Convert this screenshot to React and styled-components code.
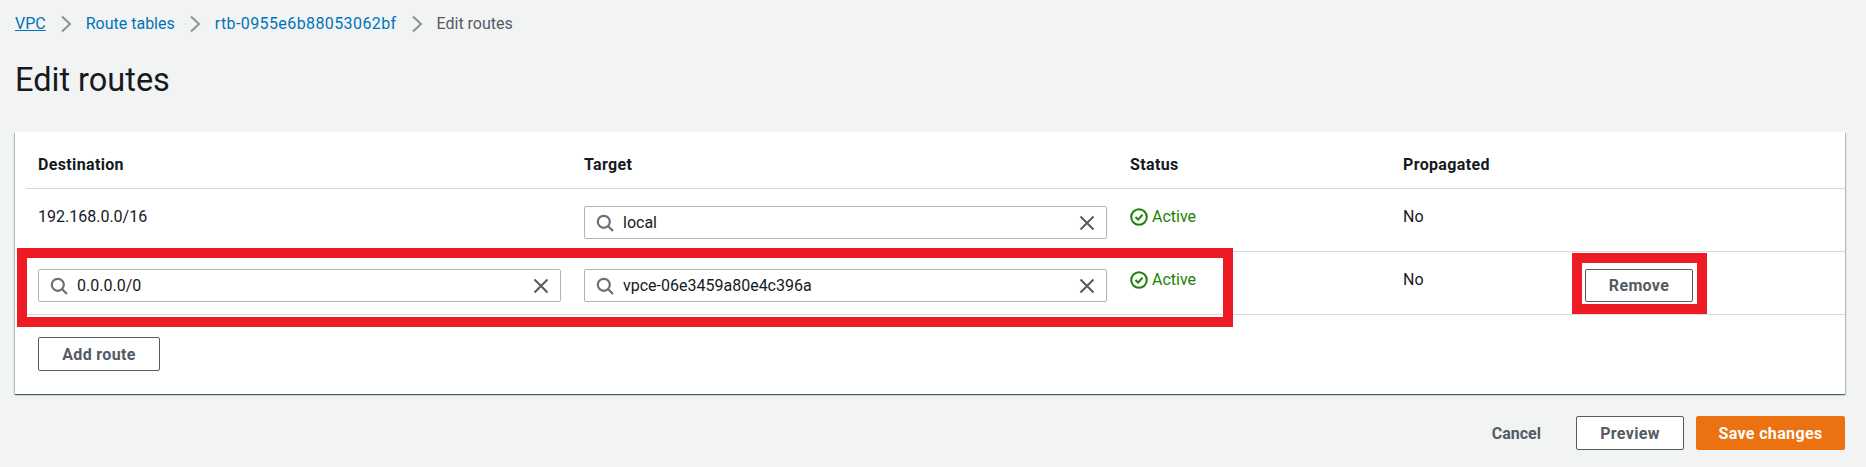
import React from "react";
import styled, { createGlobalStyle } from "styled-components";

const GlobalStyle = createGlobalStyle`
  html, body {
    margin: 0;
    padding: 0;
    background: #f2f3f3;
    font-family: Roboto, "Noto Sans", Arial, sans-serif;
    color: #16191f;
  }
`;

const Page = styled.div`
  width: 1866px;
  height: 467px;
  overflow: hidden;
  position: relative;
  box-sizing: border-box;
  padding: 14px 21px 0 15px;
`;

const Crumbs = styled.nav`
  display: flex;
  align-items: center;
  height: 20px;
  font-size: 16px;
  line-height: 20px;
`;

const Crumb = styled.a`
  color: ${(p) => (p.$current ? "#545b64" : "#0073bb")};
  text-decoration: ${(p) => (p.$under ? "underline" : "none")};
  letter-spacing: ${(p) => p.$track || 0}px;
`;

const Chevron = styled.svg`
  width: 14px;
  height: 18px;
  margin: 0 12.5px 0 13.5px;
  flex: none;
`;

const Title = styled.h1`
  margin: 27px 0 0;
  font-size: 32.5px;
  line-height: 38px;
  font-weight: 400;
`;

const Card = styled.section`
  position: relative;
  margin-top: 33px;
  height: 262px;
  background: #fff;
  box-sizing: border-box;
  padding-left: 11px;
  box-shadow: 0 1px 1px 0 rgba(0, 28, 36, 0.5), 1px 1px 1px 0 rgba(0, 28, 36, 0.2),
    -1px 1px 1px 0 rgba(0, 28, 36, 0.2);
`;

const Row = styled.div`
  display: grid;
  grid-template-columns: 546px 546px 273px 182px 1fr;
  height: ${(p) => p.$h}px;
  box-sizing: border-box;
  padding-left: 12px;
  border-bottom: 1px solid #d5dbdb;
`;

const HeadCell = styled.div`
  font-size: 16px;
  font-weight: 700;
  line-height: 20px;
  letter-spacing: 0.35px;
  padding-top: 23px;
`;

const Cell = styled.div`
  font-size: 16px;
  line-height: 20px;
  padding-top: 18px;
`;

const InputCell = styled.div`
  padding-top: 17px;
`;

const SearchBox = styled.div`
  display: flex;
  align-items: center;
  width: 523px;
  height: 33px;
  box-sizing: border-box;
  border: 1px solid #aab7b8;
  border-radius: 2px;
  padding: 0 10px 0 11px;
  font-size: 16px;
  background: #fff;
`;

const BoxText = styled.span`
  flex: 1;
  margin-left: 9px;
`;

const Status = styled.div`
  display: flex;
  align-items: center;
  gap: 4px;
  color: #1d8102;
`;

const Button = styled.button`
  display: block;
  box-sizing: border-box;
  height: ${(p) => p.$h || 33}px;
  width: ${(p) => p.$w}px;
  padding: 0;
  border: 1px solid #545b64;
  border-radius: 2px;
  background: #fff;
  color: #545b64;
  font: 700 16px Roboto, "Noto Sans", Arial, sans-serif;
  letter-spacing: 0.35px;
`;

const PrimaryButton = styled(Button)`
  background: #ec7211;
  border-color: #ec7211;
  color: #fff;
`;

const AddRow = styled.div`
  padding: 22px 0 0 12px;
`;

const Footer = styled.footer`
  display: flex;
  justify-content: flex-end;
  align-items: center;
  gap: 12px;
  margin-top: 22px;
`;

const Cancel = styled.span`
  font-size: 16px;
  font-weight: 700;
  color: #545b64;
  margin-right: 23px;
`;

// red annotation frames drawn on top of the screenshot
const Frame = styled.div`
  position: absolute;
  box-sizing: border-box;
  border: 10px solid #ed1c24;
  left: ${(p) => p.$x}px;
  top: ${(p) => p.$y}px;
  width: ${(p) => p.$w}px;
  height: ${(p) => p.$h}px;
  pointer-events: none;
`;

const SearchIcon = () => (
  <svg width="18" height="18" viewBox="0 0 18 18" fill="none" stroke="#687078" strokeWidth="2.2">
    <circle cx="7.8" cy="7.8" r="6" />
    <path d="M12 12l5 5" />
  </svg>
);

const ClearIcon = () => (
  <svg width="18" height="18" viewBox="0 0 18 18" fill="none" stroke="#545b64" strokeWidth="2">
    <path d="M2.5 2.5l13 13M15.5 2.5l-13 13" />
  </svg>
);

const CheckIcon = () => (
  <svg width="18" height="18" viewBox="0 0 18 18" fill="none" stroke="#1d8102" strokeWidth="2">
    <circle cx="9" cy="9" r="7.8" />
    <path d="M5.5 9l2.6 2.6 4.4-4.8" />
  </svg>
);

const Sep = () => (
  <Chevron viewBox="0 0 14 18" fill="none" stroke="#879596" strokeWidth="2">
    <path d="M3 1.5l8 7.5-8 7.5" />
  </Chevron>
);

function Search({ value }) {
  return (
    <SearchBox>
      <SearchIcon />
      <BoxText>{value}</BoxText>
      <ClearIcon />
    </SearchBox>
  );
}

function Active() {
  return (
    <Cell>
      <Status>
        <CheckIcon />
        Active
      </Status>
    </Cell>
  );
}

export default function App() {
  return (
    <Page>
      <GlobalStyle />
      <Crumbs>
        <Crumb $under>VPC</Crumb>
        <Sep />
        <Crumb>Route tables</Crumb>
        <Sep />
        <Crumb $track={0.4}>rtb-0955e6b88053062bf</Crumb>
        <Sep />
        <Crumb $current>Edit routes</Crumb>
      </Crumbs>
      <Title>Edit routes</Title>
      <Card>
        <Row $h={57}>
          <HeadCell>Destination</HeadCell>
          <HeadCell>Target</HeadCell>
          <HeadCell>Status</HeadCell>
          <HeadCell>Propagated</HeadCell>
        </Row>
        <Row $h={63}>
          <Cell>192.168.0.0/16</Cell>
          <InputCell>
            <Search value="local" />
          </InputCell>
          <Active />
          <Cell>No</Cell>
        </Row>
        <Row $h={63}>
          <InputCell>
            <Search value="0.0.0.0/0" />
          </InputCell>
          <InputCell>
            <Search value="vpce-06e3459a80e4c396a" />
          </InputCell>
          <Active />
          <Cell>No</Cell>
          <InputCell>
            <Button $w={108}>Remove</Button>
          </InputCell>
        </Row>
        <AddRow>
          <Button $w={122} $h={34}>Add route</Button>
        </AddRow>
      </Card>
      <Footer>
        <Cancel>Cancel</Cancel>
        <Button $w={108} $h={34}>Preview</Button>
        <PrimaryButton $w={149} $h={34}>Save changes</PrimaryButton>
      </Footer>
      <Frame $x={17} $y={248} $w={1216} $h={79} />
      <Frame $x={1572} $y={253} $w={135} $h={61} />
    </Page>
  );
}
